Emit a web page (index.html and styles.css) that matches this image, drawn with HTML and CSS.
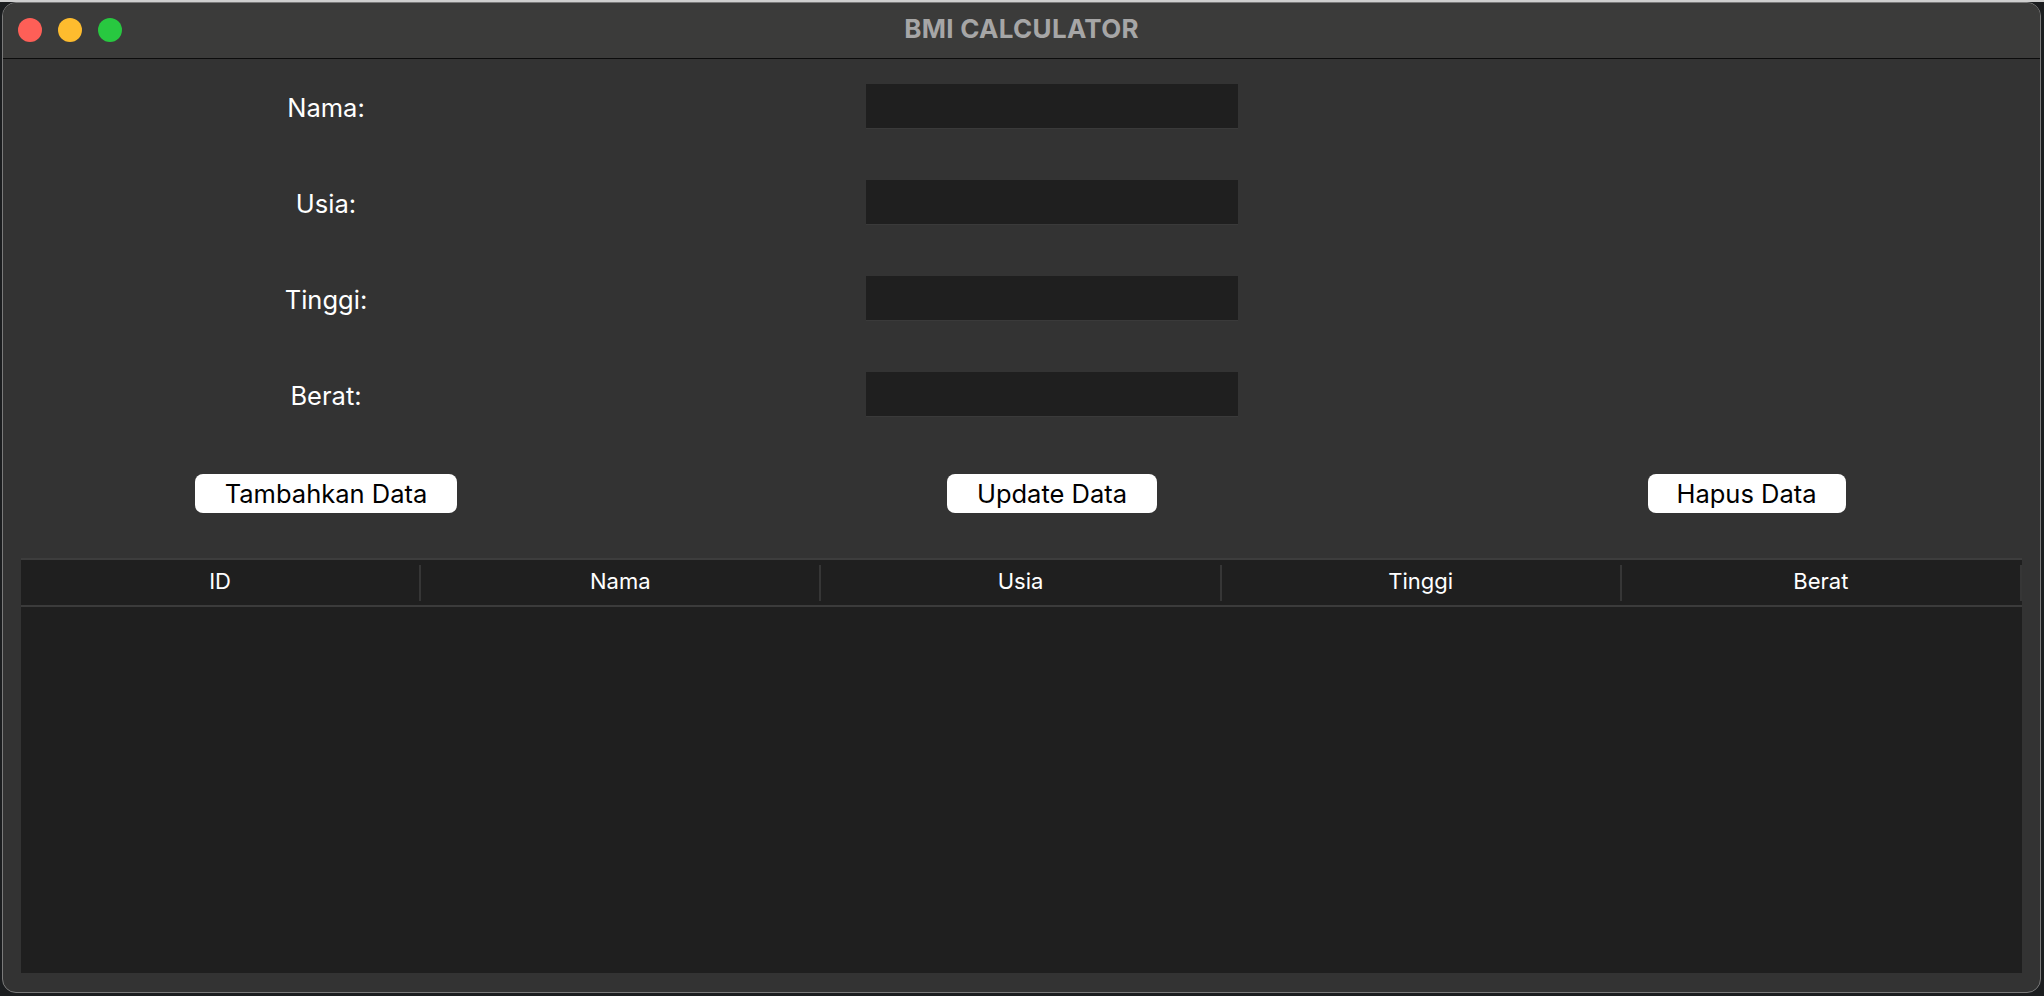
FILE: index.html
```html
<!DOCTYPE html>
<html lang="id">
<head>
<meta charset="utf-8">
<title>BMI CALCULATOR</title>
<link rel="stylesheet" href="styles.css">
</head>
<body>
<div class="window">
  <header class="titlebar">
    <div class="lights">
      <span class="light red"></span>
      <span class="light yellow"></span>
      <span class="light green"></span>
    </div>
    <div class="title">BMI CALCULATOR</div>
  </header>
  <main class="content">
    <div class="form">
      <label class="label">Nama:</label><div class="input"></div>
      <label class="label">Usia:</label><div class="input"></div>
      <label class="label">Tinggi:</label><div class="input"></div>
      <label class="label">Berat:</label><div class="input"></div>
    </div>
    <div class="actions">
      <button class="btn">Tambahkan Data</button>
      <button class="btn">Update Data</button>
      <button class="btn">Hapus Data</button>
    </div>
    <div class="table">
      <div class="thead">
        <div class="th">ID</div>
        <div class="th">Nama</div>
        <div class="th">Usia</div>
        <div class="th">Tinggi</div>
        <div class="th">Berat</div>
      </div>
      <div class="tbody"></div>
    </div>
  </main>
</div>
</body>
</html>
```
FILE: styles.css
```css
* { box-sizing: border-box; }
html, body { margin: 0; padding: 0; }
body {
  width: 2044px;
  height: 996px;
  background: linear-gradient(#cfcfcf 0, #cfcfcf 2px, #1b1d1f 2px);
  font-family: Inter, "Noto Sans", sans-serif;
  padding: 2px 0 0 2px;
}
.window {
  width: 2039px;
  height: 991px;
  border: 1px solid #7a7a7a;
  border-radius: 14px;
  overflow: hidden;
  background: #333333;
  display: flex;
  flex-direction: column;
}
.titlebar {
  height: 56px;
  flex: none;
  background: #3b3b3a;
  border-bottom: 1px solid #0c0c0c;
  position: relative;
  display: flex;
  align-items: center;
  justify-content: center;
}
.lights {
  position: absolute;
  left: 15px;
  top: 15px;
  display: flex;
  gap: 16px;
}
.light { width: 24px; height: 24px; border-radius: 50%; display: block; }
.red { background: #fe5f57; }
.yellow { background: #febc2e; }
.green { background: #28c840; }
.title {
  color: #a6a6a6;
  font-weight: 700;
  font-size: 26px;
  letter-spacing: 0.3px;
  margin-top: -4px;
}
.content {
  flex: 1;
  display: flex;
  flex-direction: column;
  padding: 25px 18px 19px 18px;
}
.form {
  display: grid;
  grid-template-columns: 646px 806px 1fr;
  grid-auto-rows: 44px;
  row-gap: 52px;
  margin-left: -18px;
  margin-right: -18px;
}
.label {
  grid-column: 1;
  justify-self: center;
  align-self: center;
  color: #ffffff;
  font-size: 25.5px;
  margin-top: 3px;
}
.input {
  grid-column: 2;
  justify-self: center;
  width: 372px;
  height: 44px;
  background: #1f1f1f;
  box-shadow: 0 1px 0 #3a3a3a;
}
.actions {
  display: grid;
  grid-template-columns: 646px 806px 1fr;
  margin: 58px -18px 0 -18px;
  height: 39px;
}
.btn {
  justify-self: center;
  height: 39px;
  background: #ffffff;
  color: #000000;
  border: none;
  border-radius: 8px;
  font-family: Inter, "Noto Sans", sans-serif;
  font-size: 25.5px;
  padding: 0;
}
.btn:nth-child(1) { width: 262px; }
.btn:nth-child(2) { width: 210px; }
.btn:nth-child(3) { width: 198px; margin-right: 2px; }
.table {
  margin-top: 45px;
  flex: 1;
  display: flex;
  flex-direction: column;
  background: #1f1f1f;
  border-top: 2px solid #3d3d3d;
}
.thead {
  display: grid;
  grid-template-columns: repeat(5, 1fr);
  height: 47px;
  border-bottom: 2px solid #3b3b3b;
  align-items: center;
}
.th {
  color: #ffffff;
  font-size: 22px;
  text-align: center;
  height: 36px;
  line-height: 32px;
  border-right: 2px solid #363636;
}
.tbody { flex: 1; }
```
